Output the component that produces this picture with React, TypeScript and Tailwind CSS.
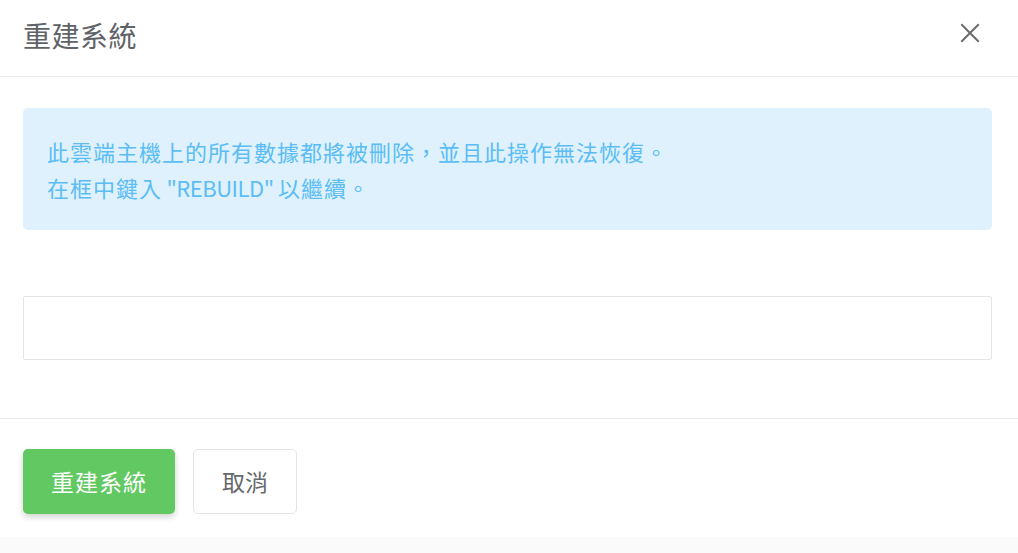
import React from "react";

export default function App() {
  const font = { fontFamily: '"Noto Sans CJK TC", "Noto Sans", sans-serif' };
  return (
    <div className="w-[1018px] h-[553px] bg-white flex flex-col overflow-hidden" style={font}>
      <div className="h-[77px] shrink-0 border-b border-[#e6e8eb] flex items-center justify-between pl-[23px] pr-[38px] pb-[6px]">
        <div className="text-[28px] leading-[38px] text-[#5f6267] tracking-[0.5px]">重建系統</div>
        <svg width="20" height="20" viewBox="0 0 20 20" className="text-[#6b6b6b] -mt-[4px]">
          <path d="M2 2 L18 18 M18 2 L2 18" stroke="currentColor" strokeWidth="2" strokeLinecap="square" />
        </svg>
      </div>
      <div className="pl-[23px] pr-[26px] pt-[31px] flex flex-col">
        <div className="h-[122px] rounded-[5px] bg-[#def1fd] px-[24px] flex flex-col justify-center text-[22px] leading-[36px] tracking-[1px] text-[#5bbdf4]">
          <div>此雲端主機上的所有數據都將被刪除，並且此操作無法恢復。</div>
          <div>
            在框中鍵入<span className="tracking-[-0.5px]"> "REBUILD" </span>以繼續。
          </div>
        </div>
        <input
          className="mt-[66px] h-[64px] w-full border border-[#e3e5e8] rounded-[2px] px-4 text-[20px] outline-none"
          type="text"
        />
      </div>
      <div className="mt-[58px] border-t border-[#e6e8eb] pl-[23px] pt-[30px] flex gap-[18px]">
        <button className="w-[152px] h-[65px] rounded-[5px] bg-[#62c962] text-white text-[23px] tracking-[1px] shadow-[0_3px_6px_rgba(0,0,0,0.18)]">
          重建系統
        </button>
        <button className="w-[104px] h-[65px] rounded-[5px] bg-white border border-[#e3e5e8] text-[#66686c] text-[23px]">
          取消
        </button>
      </div>
      <div className="mt-auto h-[16px] bg-[#fafafa]" />
    </div>
  );
}
